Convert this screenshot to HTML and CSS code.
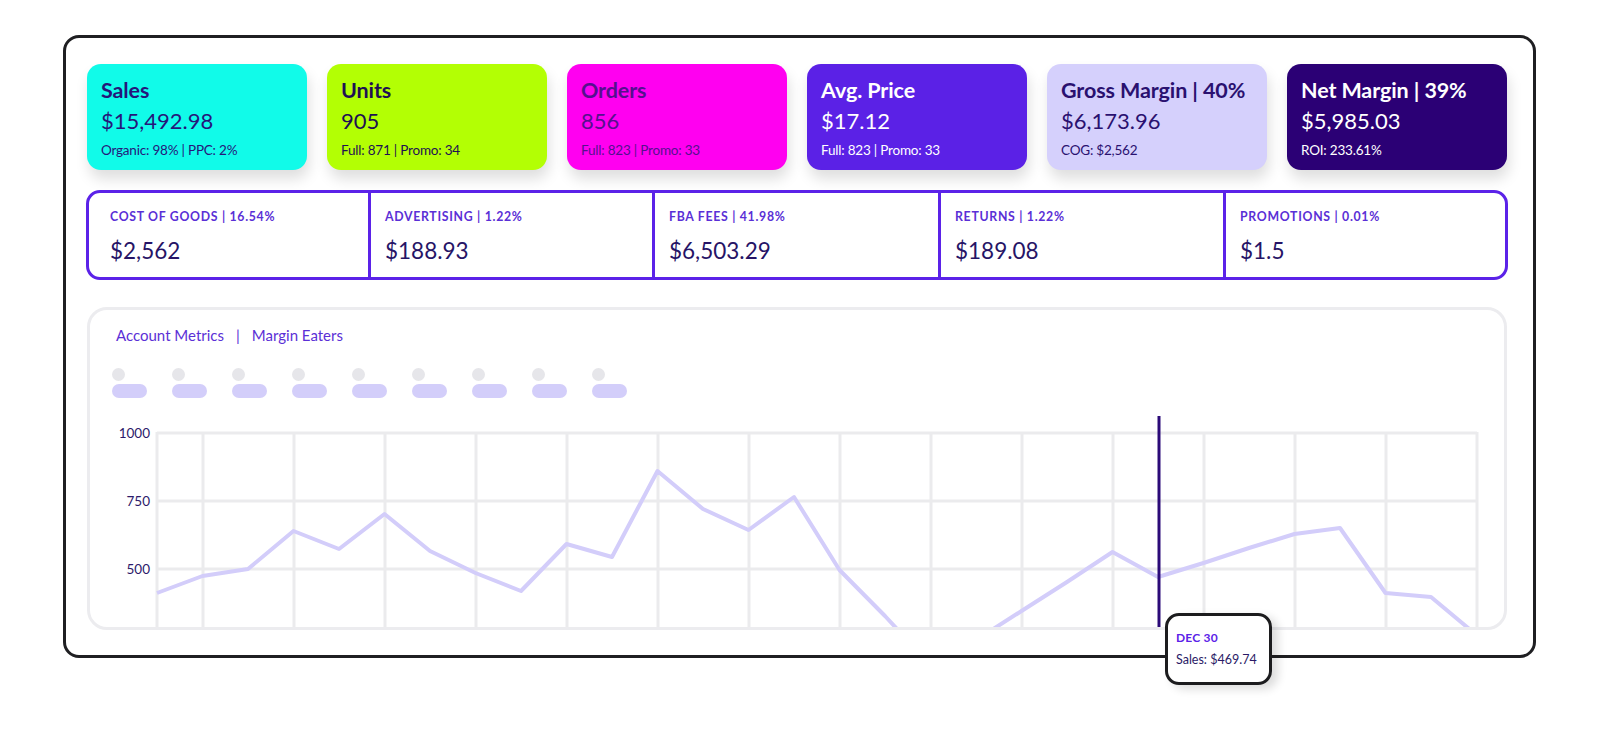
FILE: index.html
```html
<!DOCTYPE html>
<html lang="en">
<head>
<meta charset="utf-8">
<title>Dashboard</title>
<link rel="stylesheet" href="styles.css">
</head>
<body>
<div class="frame">
  <div class="cards">
    <div class="card c-sales">
      <div class="c-title">Sales</div>
      <div class="c-value">$15,492.98</div>
      <div class="c-sub">Organic: 98% | PPC: 2%</div>
    </div>
    <div class="card c-units">
      <div class="c-title">Units</div>
      <div class="c-value">905</div>
      <div class="c-sub">Full: 871 | Promo: 34</div>
    </div>
    <div class="card c-orders">
      <div class="c-title">Orders</div>
      <div class="c-value">856</div>
      <div class="c-sub">Full: 823 | Promo: 33</div>
    </div>
    <div class="card c-avg">
      <div class="c-title">Avg. Price</div>
      <div class="c-value">$17.12</div>
      <div class="c-sub">Full: 823 | Promo: 33</div>
    </div>
    <div class="card c-gross">
      <div class="c-title">Gross Margin | 40%</div>
      <div class="c-value">$6,173.96</div>
      <div class="c-sub">COG: $2,562</div>
    </div>
    <div class="card c-net">
      <div class="c-title">Net Margin | 39%</div>
      <div class="c-value">$5,985.03</div>
      <div class="c-sub">ROI: 233.61%</div>
    </div>
  </div>

  <div class="metrics">
    <div class="m-cell">
      <div class="m-label">COST OF GOODS | 16.54%</div>
      <div class="m-value">$2,562</div>
    </div>
    <div class="m-cell">
      <div class="m-label">ADVERTISING | 1.22%</div>
      <div class="m-value">$188.93</div>
    </div>
    <div class="m-cell">
      <div class="m-label">FBA FEES | 41.98%</div>
      <div class="m-value">$6,503.29</div>
    </div>
    <div class="m-cell">
      <div class="m-label">RETURNS | 1.22%</div>
      <div class="m-value">$189.08</div>
    </div>
    <div class="m-cell">
      <div class="m-label">PROMOTIONS | 0.01%</div>
      <div class="m-value">$1.5</div>
    </div>
  </div>

  <div class="chart-card">
    <div class="tabs"><span>Account Metrics</span><span class="sep">|</span><span>Margin Eaters</span></div>
    <div class="legend">
      <div class="lg"><span class="dot"></span><span class="pill"></span></div>
      <div class="lg"><span class="dot"></span><span class="pill"></span></div>
      <div class="lg"><span class="dot"></span><span class="pill"></span></div>
      <div class="lg"><span class="dot"></span><span class="pill"></span></div>
      <div class="lg"><span class="dot"></span><span class="pill"></span></div>
      <div class="lg"><span class="dot"></span><span class="pill"></span></div>
      <div class="lg"><span class="dot"></span><span class="pill"></span></div>
      <div class="lg"><span class="dot"></span><span class="pill"></span></div>
      <div class="lg"><span class="dot"></span><span class="pill"></span></div>
    </div>
    <svg class="plot" width="1414" height="222" viewBox="0 0 1414 222">
      <g class="grid">
        <line x1="67" y1="28" x2="1387" y2="28"/>
        <line x1="67" y1="96" x2="1387" y2="96"/>
        <line x1="67" y1="164" x2="1387" y2="164"/>
        <line x1="67" y1="27" x2="67" y2="222"/>
        <line x1="113" y1="27" x2="113" y2="222"/>
        <line x1="204" y1="27" x2="204" y2="222"/>
        <line x1="295" y1="27" x2="295" y2="222"/>
        <line x1="386" y1="27" x2="386" y2="222"/>
        <line x1="477" y1="27" x2="477" y2="222"/>
        <line x1="568" y1="27" x2="568" y2="222"/>
        <line x1="659" y1="27" x2="659" y2="222"/>
        <line x1="750" y1="27" x2="750" y2="222"/>
        <line x1="841" y1="27" x2="841" y2="222"/>
        <line x1="932" y1="27" x2="932" y2="222"/>
        <line x1="1023" y1="27" x2="1023" y2="222"/>
        <line x1="1114" y1="27" x2="1114" y2="222"/>
        <line x1="1205" y1="27" x2="1205" y2="222"/>
        <line x1="1296" y1="27" x2="1296" y2="222"/>
        <line x1="1387" y1="27" x2="1387" y2="222"/>
      </g>
      <g class="ylab">
        <text x="60" y="33">1000</text>
        <text x="60" y="101">750</text>
        <text x="60" y="169">500</text>
      </g>
      <polyline class="series" points="67,188 112.5,171 158,164 203.5,126 249,144 294.5,109 340,146 385.5,168 431,186 476.5,139 522,152 567.5,66 613,104 658.5,125 704,92 749.5,165 795,211 840.5,260 886,235 931.5,206 977,177 1022.5,147 1068,172 1113.5,158 1159,143 1204.5,129 1250,123 1295.5,188 1341,192 1386.5,230"/>
      <line class="cursor" x1="1069" y1="11" x2="1069" y2="222"/>
    </svg>
    <div class="tooltip">
      <div class="t-date">DEC 30</div>
      <div class="t-val">Sales: $469.74</div>
    </div>
  </div>
</div>
</body>
</html>
```

FILE: styles.css
```css
* { box-sizing: border-box; }
html, body { margin: 0; padding: 0; background: #ffffff; }
body {
  font-family: "Lato", "Noto Sans", sans-serif;
  color: #24136e;
  width: 1600px;
  height: 739px;
  overflow: hidden;
}

.frame {
  margin: 35px 0 0 63px;
  width: 1473px;
  height: 623px;
  border: 3px solid #1f1f22;
  border-radius: 16px;
  padding: 26px 26px 0 21px;
  display: flex;
  flex-direction: column;
}

/* top cards */
.cards {
  display: grid;
  grid-template-columns: repeat(6, 220px);
  column-gap: 20px;
  height: 106px;
}
.card {
  border-radius: 14px;
  padding: 13px 0 0 14px;
  box-shadow: 2px 9px 14px rgba(0, 0, 0, 0.13);
  white-space: nowrap;
}
.c-title {
  font-size: 21.5px;
  line-height: 26px;
  font-weight: 700;
  letter-spacing: -0.1px;
}
.c-value {
  margin-top: 3px;
  font-size: 22px;
  line-height: 30px;
  font-weight: 400;
}
.c-sub {
  margin-top: 6px;
  font-size: 13.5px;
  line-height: 16px;
  letter-spacing: -0.2px;
}
.c-sales { background: #11fbe9; color: #25167a; }
.c-units { background: #b3ff04; color: #1f1052; }
.c-orders { background: #ff00f0; color: #55108e; }
.c-avg { background: #5b21e6; color: #ffffff; }
.c-gross { background: #d5d0fc; color: #2a1170; }
.c-net { background: #2b0075; color: #ffffff; }

/* margin eaters row */
.metrics {
  margin: 20px -1px 0 -1px;
  height: 90px;
  border: 3px solid #5b22e8;
  border-radius: 14px;
  display: grid;
  grid-template-columns: 279px 284px 286px 285px 1fr;
}
.m-cell {
  padding: 16px 0 0 14px;
  border-left: 3px solid #5b22e8;
}
.m-cell:first-child {
  border-left: none;
  padding-left: 21px;
}
.m-label {
  font-size: 12.3px;
  line-height: 15px;
  font-weight: 700;
  letter-spacing: 0.7px;
  color: #5a2fd6;
}
.m-value {
  margin-top: 14px;
  font-size: 22.5px;
  line-height: 26px;
  color: #261466;
}

/* chart card */
.chart-card {
  position: relative;
  margin-top: 27px;
  height: 323px;
  border: 3px solid #ececef;
  border-radius: 20px;
  padding-top: 16px;
}
.tabs {
  margin-left: 26px;
  font-size: 15px;
  line-height: 18px;
  color: #5b30d6;
  display: flex;
  gap: 12px;
}
.legend {
  margin: 24px 0 0 22px;
  display: flex;
  gap: 30px;
}
.lg {
  width: 30px;
  display: flex;
  flex-direction: column;
  gap: 3px;
}
.dot {
  width: 13px;
  height: 13px;
  border-radius: 50%;
  background: #e6e6ea;
}
.pill {
  width: 35px;
  height: 14px;
  border-radius: 7px;
  background: #d3cefa;
}
.plot {
  display: block;
  margin-top: 7px;
}
.grid line {
  stroke: #ebebed;
  stroke-width: 3;
}
.ylab text {
  font-family: "Lato", "Noto Sans", sans-serif;
  font-size: 13.5px;
  fill: #2c1a6b;
  text-anchor: end;
}
.series {
  fill: none;
  stroke: #d3cdfa;
  stroke-width: 4;
  stroke-linejoin: round;
}
.cursor {
  stroke: #2b0a78;
  stroke-width: 3;
}

.tooltip {
  position: absolute;
  left: 1075px;
  top: 303px;
  width: 107px;
  height: 72px;
  background: #ffffff;
  border: 3px solid #1c1c1e;
  border-radius: 14px;
  padding: 14px 0 0 8px;
  box-shadow: 6px 4px 10px rgba(0, 0, 0, 0.14);
  z-index: 2;
  white-space: nowrap;
}
.t-date {
  font-size: 12px;
  line-height: 16px;
  font-weight: 700;
  color: #5b22e8;
  letter-spacing: 0.2px;
}
.t-val {
  margin-top: 6px;
  font-size: 12.5px;
  line-height: 16px;
  color: #2a1a66;
}
```
